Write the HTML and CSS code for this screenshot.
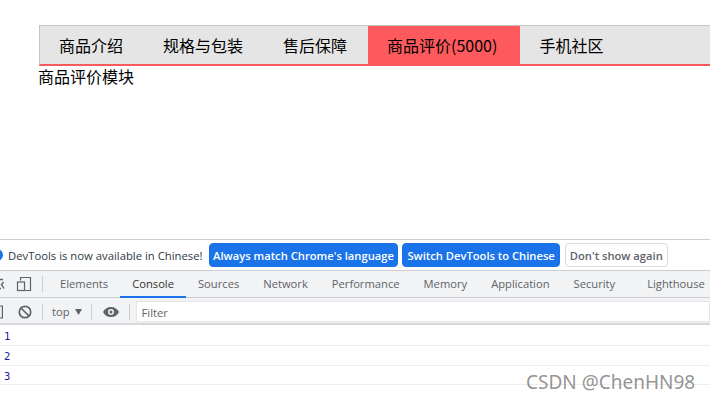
FILE: index.html
```html
<!DOCTYPE html>
<html lang="zh">
<head>
<meta charset="utf-8">
<title>商品评价</title>
<link rel="stylesheet" href="styles.css">
</head>
<body>
<main class="page">
  <ul class="tabs">
    <li class="tab">商品介绍</li>
    <li class="tab">规格与包装</li>
    <li class="tab">售后保障</li>
    <li class="tab tab-active">商品评价(5000)</li>
    <li class="tab">手机社区</li>
  </ul>
  <div class="panel">商品评价模块</div>
</main>
<section class="devtools">
  <div class="infobar">
    <svg class="info-icon" width="3" height="16" viewBox="0 0 3 16"><circle cx="-3" cy="8" r="6" fill="#1a73e8"/></svg>
    <span class="info-text">DevTools is now available in Chinese!</span>
    <button class="btn btn-primary btn-first">Always match Chrome's language</button>
    <button class="btn btn-primary">Switch DevTools to Chinese</button>
    <button class="btn btn-plain">Don't show again</button>
  </div>
  <div class="dt-tabs">
    <svg class="inspect-icon" width="5" height="16" viewBox="0 0 5 16"><path d="M0 3.500h3M0 12.500h1M3.500 6l-2 2.500 2.500 4" fill="none" stroke="#5f6368" stroke-width="1.400"/></svg>
    <svg class="device-icon" width="16" height="16" viewBox="0 0 16 16"><path d="M4.500 4.500V1.500h10v13H9" fill="none" stroke="#5f6368" stroke-width="1.200"/><rect x="1.500" y="6" width="7" height="8.500" fill="none" stroke="#5f6368" stroke-width="1.200"/></svg>
    <span class="sep"></span>
    <span class="dt-tab dt-tab-first">Elements</span>
    <span class="dt-tab dt-tab-active">Console</span>
    <span class="dt-tab">Sources</span>
    <span class="dt-tab">Network</span>
    <span class="dt-tab">Performance</span>
    <span class="dt-tab">Memory</span>
    <span class="dt-tab">Application</span>
    <span class="dt-tab">Security</span>
    <span class="dt-tab dt-tab-last">Lighthouse</span>
  </div>
  <div class="dt-filter">
    <svg class="side-icon" width="3" height="14" viewBox="0 0 3 14"><path d="M0 1h2.400v12H0" fill="none" stroke="#5f6368" stroke-width="1.200"/></svg>
    <svg class="clear-icon" width="14" height="14" viewBox="0 0 14 14"><circle cx="7" cy="7" r="5.700" fill="none" stroke="#5f6368" stroke-width="1.700"/><path d="M3 3l8 8" stroke="#5f6368" stroke-width="1.700"/></svg>
    <span class="sep sep-first"></span>
    <span class="ctx">top</span>
    <svg class="caret" width="7" height="6" viewBox="0 0 7 6"><path d="M0 0h7L3.500 6z" fill="#5f6368"/></svg>
    <span class="sep sep-ctx"></span>
    <svg class="eye" width="16" height="10" viewBox="0 0 16 10"><path fill-rule="evenodd" d="M8 0c3.600 0 6.600 2 8 5-1.400 3-4.400 5-8 5S1.400 8 0 5c1.400-3 4.400-5 8-5zm0 2a3 3 0 100 6 3 3 0 000-6zm0 1.500a1.500 1.500 0 110 3 1.500 1.500 0 010-3z" fill="#5f6368"/></svg>
    <span class="sep sep-eye"></span>
    <div class="filter-input">Filter</div>
  </div>
  <div class="console">
    <div class="log">1</div>
    <div class="log">2</div>
    <div class="log log-last">3</div>
  </div>
</section>
<div class="watermark">CSDN @ChenHN98</div>
</body>
</html>
```
FILE: styles.css
```css
html, body {
  margin: 0;
  padding: 0;
}
body {
  width: 710px;
  height: 400px;
  overflow: hidden;
  position: relative;
  background: #fff;
  font-family: "Noto Sans CJK SC", "Liberation Sans", sans-serif;
}
.page {
  height: 239px;
  padding: 25px 0 0 39px;
  box-sizing: border-box;
}
.tabs {
  display: flex;
  list-style: none;
  margin: 0;
  padding: 0;
  height: 38px;
  background: #e5e5e5;
  border-top: 1px solid #c4c4c4;
  border-left: 1px solid #c4c4c4;
  border-bottom: 2px solid #f95a5c;
}
.tab {
  padding: 0 21px 0 19px;
  font-size: 16px;
  line-height: 39px;
  color: #000;
  white-space: nowrap;
}
.tab-active {
  padding-right: 23px;
  background: #fe5a5e;
}
.panel {
  font-size: 16px;
  line-height: 24px;
  margin: -2px 0 0 -1px;
  color: #000;
}
.devtools {
  font-family: "Open Sans", "Liberation Sans", sans-serif;
  font-size: 11.2px;
  border-top: 1px solid #cbcdd1;
}
.infobar {
  display: flex;
  align-items: center;
  gap: 5px;
  height: 30px;
  border-bottom: 1px solid #cbcdd1;
  white-space: nowrap;
  background: #fff;
}
.info-icon {
  flex: none;
}
.info-text {
  color: #303942;
  font-size: 11.3px;
  margin-right: 1px;
}
.btn {
  flex: none;
  height: 24px;
  padding: 0 4px;
  margin-right: -1px;
  border-radius: 4px;
  font: 600 11.2px "Open Sans", "Liberation Sans", sans-serif;
  white-space: nowrap;
}
.btn-first {
  padding: 0 3.500px;
}
.btn-primary {
  background: #1a73e8;
  border: 1px solid #1a73e8;
  color: #fff;
}
.btn-plain {
  margin-left: 1px;
  background: #fff;
  border: 1px solid #dadce0;
  color: #5f6368;
}
.dt-tabs {
  display: flex;
  align-items: center;
  height: 26px;
  background: #f1f3f4;
  border-bottom: 1px solid #cbcdd1;
  white-space: nowrap;
}
.inspect-icon {
  flex: none;
}
.device-icon {
  flex: none;
  margin-left: 11px;
}
.sep {
  flex: none;
  width: 1px;
  height: 16px;
  background: #cbcdd1;
  margin-left: 10px;
}
.dt-tab {
  flex: none;
  height: 26px;
  line-height: 26px;
  padding: 0 12px;
  color: #5f6368;
  box-sizing: border-box;
}
.dt-tab-first {
  margin-left: 5px;
}
.dt-tab-active {
  color: #333;
  border-bottom: 2px solid #1a73e8;
  height: 27px;
  margin-top: 1px;
}
.dt-tab-last {
  margin-left: 8px;
}
.dt-filter {
  display: flex;
  align-items: center;
  height: 27px;
  box-sizing: border-box;
  padding-top: 2px;
  background: #f1f3f4;
  border-bottom: 2px solid #d6d8db;
  white-space: nowrap;
}
.side-icon {
  flex: none;
}
.clear-icon {
  flex: none;
  margin-left: 15px;
}
.sep-first {
  margin-left: 10px;
}
.ctx {
  color: #5f6368;
  margin-left: 9px;
}
.caret {
  flex: none;
  margin-left: 5px;
}
.sep-ctx {
  margin-left: 9px;
}
.eye {
  flex: none;
  margin-left: 11px;
}
.sep-eye {
  margin-left: 10px;
}
.filter-input {
  flex: 1;
  margin-left: 6px;
  height: 21px;
  line-height: 21px;
  padding-left: 5px;
  box-sizing: border-box;
  background: #fff;
  border: 1px solid #e4e6e8;
  color: #5f6368;
}
.console {
  background: #fff;
  padding-top: 1px;
}
.log {
  height: 19px;
  padding-left: 4px;
  font: 10.500px/20px "DejaVu Sans Mono", monospace;
  color: #1a1aa6;
  border-bottom: 1px solid #eee;
}
.log-last {
  height: 18px;
}
.watermark {
  position: absolute;
  left: 526px;
  top: 369px;
  font: 19px "Noto Sans", "Liberation Sans", sans-serif;
  color: rgba(120, 120, 120, 0.8);
  white-space: nowrap;
}
```
